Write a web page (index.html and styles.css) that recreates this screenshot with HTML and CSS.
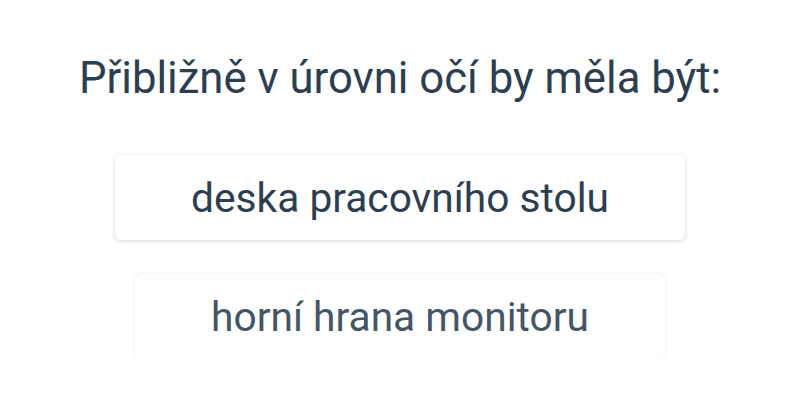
FILE: index.html
```html
<!DOCTYPE html>
<html lang="cs">
<head>
<meta charset="utf-8">
<link rel="stylesheet" href="styles.css">
</head>
<body>
<main class="quiz">
  <h1 class="question">Přibližně v úrovni očí by měla být:</h1>
  <div class="options">
    <button class="option">deska pracovního stolu</button>
    <button class="option option-fading">horní hrana monitoru</button>
  </div>
</main>
</body>
</html>
```
FILE: styles.css
```css
html, body {
  margin: 0;
  padding: 0;
  background: #ffffff;
}
body {
  font-family: Roboto, "Noto Sans", sans-serif;
  color: #2c3e50;
}
.quiz {
  display: flex;
  flex-direction: column;
  align-items: center;
  padding-top: 53px;
}
.question {
  margin: 0;
  font-size: 43.7px;
  font-weight: 400;
  line-height: 50px;
}
.options {
  display: flex;
  flex-direction: column;
  align-items: center;
  gap: 34px;
  margin-top: 52px;
}
.option {
  font-family: inherit;
  font-size: 40.7px;
  color: #2c3e50;
  background: #ffffff;
  border: none;
  border-radius: 6px;
  height: 85px;
  padding: 0 76px;
  box-shadow: 0 1px 4px rgba(0, 0, 0, 0.16);
}
.option-fading {
  opacity: 0.88;
  box-shadow: 0 0 4px rgba(0, 0, 0, 0.1);
}
```
